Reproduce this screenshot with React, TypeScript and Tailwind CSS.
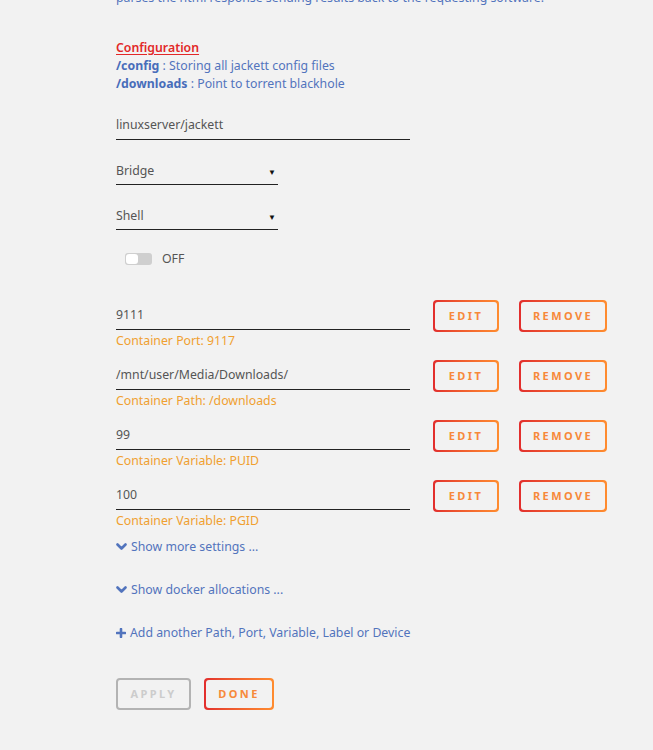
import React from "react";

const font = { fontFamily: '"Noto Sans", "Open Sans", Arial, sans-serif' };

function Chevron() {
  return (
    <svg width="11" height="8" viewBox="0 0 11 8" className="shrink-0">
      <polyline points="1.5,1.5 5.5,5.5 9.5,1.5" fill="none" stroke="currentColor" strokeWidth="2.6" strokeLinecap="round" strokeLinejoin="round" />
    </svg>
  );
}

function Plus() {
  return (
    <svg width="10" height="10" viewBox="0 0 10 10" className="shrink-0">
      <path d="M5 1 V9 M1 5 H9" fill="none" stroke="currentColor" strokeWidth="2.6" strokeLinecap="round" />
    </svg>
  );
}

function GradButton({ label, width }: { label: string; width: string }) {
  return (
    <div className={`rounded-[4px] bg-gradient-to-r from-[#e22d2d] to-[#ff8c2f] p-[2px] ${width} h-[32px]`}>
      <div className="flex h-full w-full items-center justify-center rounded-[3px] bg-[#f2f2f2]">
        <span className="text-[11px] font-bold tracking-[2.4px] text-[#f7893a]">{label}</span>
      </div>
    </div>
  );
}

function MappingRow({ value, caption }: { value: string; caption: string }) {
  return (
    <div className="flex h-[60px] items-start">
      <div className="w-[294px] pt-[2px]">
        <div className="flex h-[28px] items-center border-b border-[#222] text-[12.3px] text-[#555]">{value}</div>
        <div className="mt-[3px] text-[12.3px] leading-[16px] text-[#f0a030]">{caption}</div>
      </div>
      <div className="ml-[23px]">
        <GradButton label="EDIT" width="w-[66px]" />
      </div>
      <div className="ml-[20px]">
        <GradButton label="REMOVE" width="w-[88px]" />
      </div>
    </div>
  );
}

function SelectField({ value }: { value: string }) {
  return (
    <div className="flex h-[26px] w-[162px] items-center justify-between border-b border-[#222] pr-[2px] text-[12.3px] text-[#555]">
      <span>{value}</span>
      <span className="text-[8px] text-[#111]">▼</span>
    </div>
  );
}

function Link({ icon, text }: { icon: React.ReactNode; text: string }) {
  return (
    <div className="flex h-[43px] items-start">
      <div className="flex h-[18px] items-center gap-[4px] text-[12.3px] text-[#5274bd]">
        {icon}
        <span>{text}</span>
      </div>
    </div>
  );
}

export default function App() {
  return (
    <div className="min-h-[750px] w-full overflow-hidden bg-[#f2f2f2]" style={font}>
      <div className="pl-[116px]">
        <p className="-mt-[11px] whitespace-nowrap text-[12.3px] leading-[18px] text-[#5274bd]">
          parses the html response sending results back to the requesting software.
        </p>

        <div className="mt-[32px] text-[12.3px] leading-[18px]">
          <div className="font-semibold text-[#e22828] underline underline-offset-2">Configuration</div>
          <div className="text-[#5274bd]">
            <span className="font-bold text-[#486dba]">/config</span> : Storing all jackett config files
          </div>
          <div className="text-[#5274bd]">
            <span className="font-bold text-[#486dba]">/downloads</span> : Point to torrent blackhole
          </div>
        </div>

        <div className="mt-[19px] flex h-[28px] w-[294px] items-center border-b border-[#222] text-[12.3px] text-[#555]">
          linuxserver/jackett
        </div>

        <div className="mt-[19px]">
          <SelectField value="Bridge" />
        </div>
        <div className="mt-[19px]">
          <SelectField value="Shell" />
        </div>

        <div className="mt-[23px] flex h-[12px] items-center pl-[9px]">
          <div className="flex h-[12px] w-[27px] items-center rounded-[3px] bg-[#cfcfcf] p-[1px]">
            <div className="h-[10px] w-[12px] rounded-[3px] bg-white" />
          </div>
          <span className="ml-[10px] text-[12.3px] text-[#555]">OFF</span>
        </div>

        <div className="mt-[35px]">
          <MappingRow value="9111" caption="Container Port: 9117" />
          <MappingRow value="/mnt/user/Media/Downloads/" caption="Container Path: /downloads" />
          <MappingRow value="99" caption="Container Variable: PUID" />
          <MappingRow value="100" caption="Container Variable: PGID" />
        </div>

        <div className="-mt-[2px]">
          <Link icon={<Chevron />} text="Show more settings ..." />
          <Link icon={<Chevron />} text="Show docker allocations ..." />
          <Link icon={<Plus />} text="Add another Path, Port, Variable, Label or Device" />
        </div>

        <div className="mt-[11px] flex gap-[13px]">
          <div className="flex h-[32px] w-[75px] items-center justify-center rounded-[4px] border-2 border-[#b3b3b3]">
            <span className="text-[11px] font-bold tracking-[2.4px] text-[#cccccc]">APPLY</span>
          </div>
          <GradButton label="DONE" width="w-[70px]" />
        </div>
      </div>
    </div>
  );
}
